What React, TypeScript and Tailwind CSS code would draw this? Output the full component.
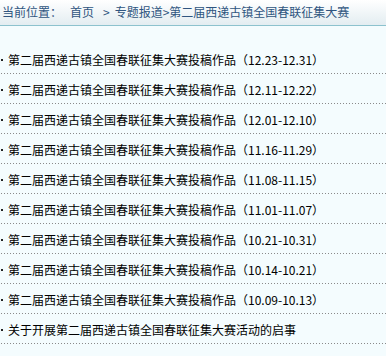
const items = [
  "第二届西递古镇全国春联征集大赛投稿作品（12.23-12.31）",
  "第二届西递古镇全国春联征集大赛投稿作品（12.11-12.22）",
  "第二届西递古镇全国春联征集大赛投稿作品（12.01-12.10）",
  "第二届西递古镇全国春联征集大赛投稿作品（11.16-11.29）",
  "第二届西递古镇全国春联征集大赛投稿作品（11.08-11.15）",
  "第二届西递古镇全国春联征集大赛投稿作品（11.01-11.07）",
  "第二届西递古镇全国春联征集大赛投稿作品（10.21-10.31）",
  "第二届西递古镇全国春联征集大赛投稿作品（10.14-10.21）",
  "第二届西递古镇全国春联征集大赛投稿作品（10.09-10.13）",
  "关于开展第二届西递古镇全国春联征集大赛活动的启事",
];

export default function App() {
  return (
    <div
      className="h-[356px] w-[386px] overflow-hidden bg-[#f4fcfe] text-[12px] leading-none"
      style={{ fontFamily: '"Noto Sans CJK SC", "Noto Sans", sans-serif' }}
    >
      {/* breadcrumb */}
      <div className="flex h-[26px] items-center border-b border-[#8cc2ce] bg-gradient-to-b from-white to-[#e3edf1] pl-[2px] pb-[2px] text-[#2f5580]">
        <span>当前位置：</span>
        <span className="ml-[8px]">首页</span>
        <span className="ml-[9px]">&gt;</span>
        <span className="ml-[5px]">专题报道&gt;第二届西递古镇全国春联征集大赛</span>
      </div>

      {/* list */}
      <ul className="mt-[18px]">
        {items.map((t) => (
          <li key={t} className="flex h-[30px] flex-col">
            <div className="flex flex-1 items-center pt-[2px] text-black">
              <span className="ml-[1px] h-[2px] w-[2px] bg-[#222]" />
              <span className="ml-[5px]">{t}</span>
            </div>
            <div className="ml-[1px] h-px bg-[repeating-linear-gradient(to_right,#8a8a8a_0_1px,transparent_1px_3px)]" />
          </li>
        ))}
      </ul>
    </div>
  );
}
